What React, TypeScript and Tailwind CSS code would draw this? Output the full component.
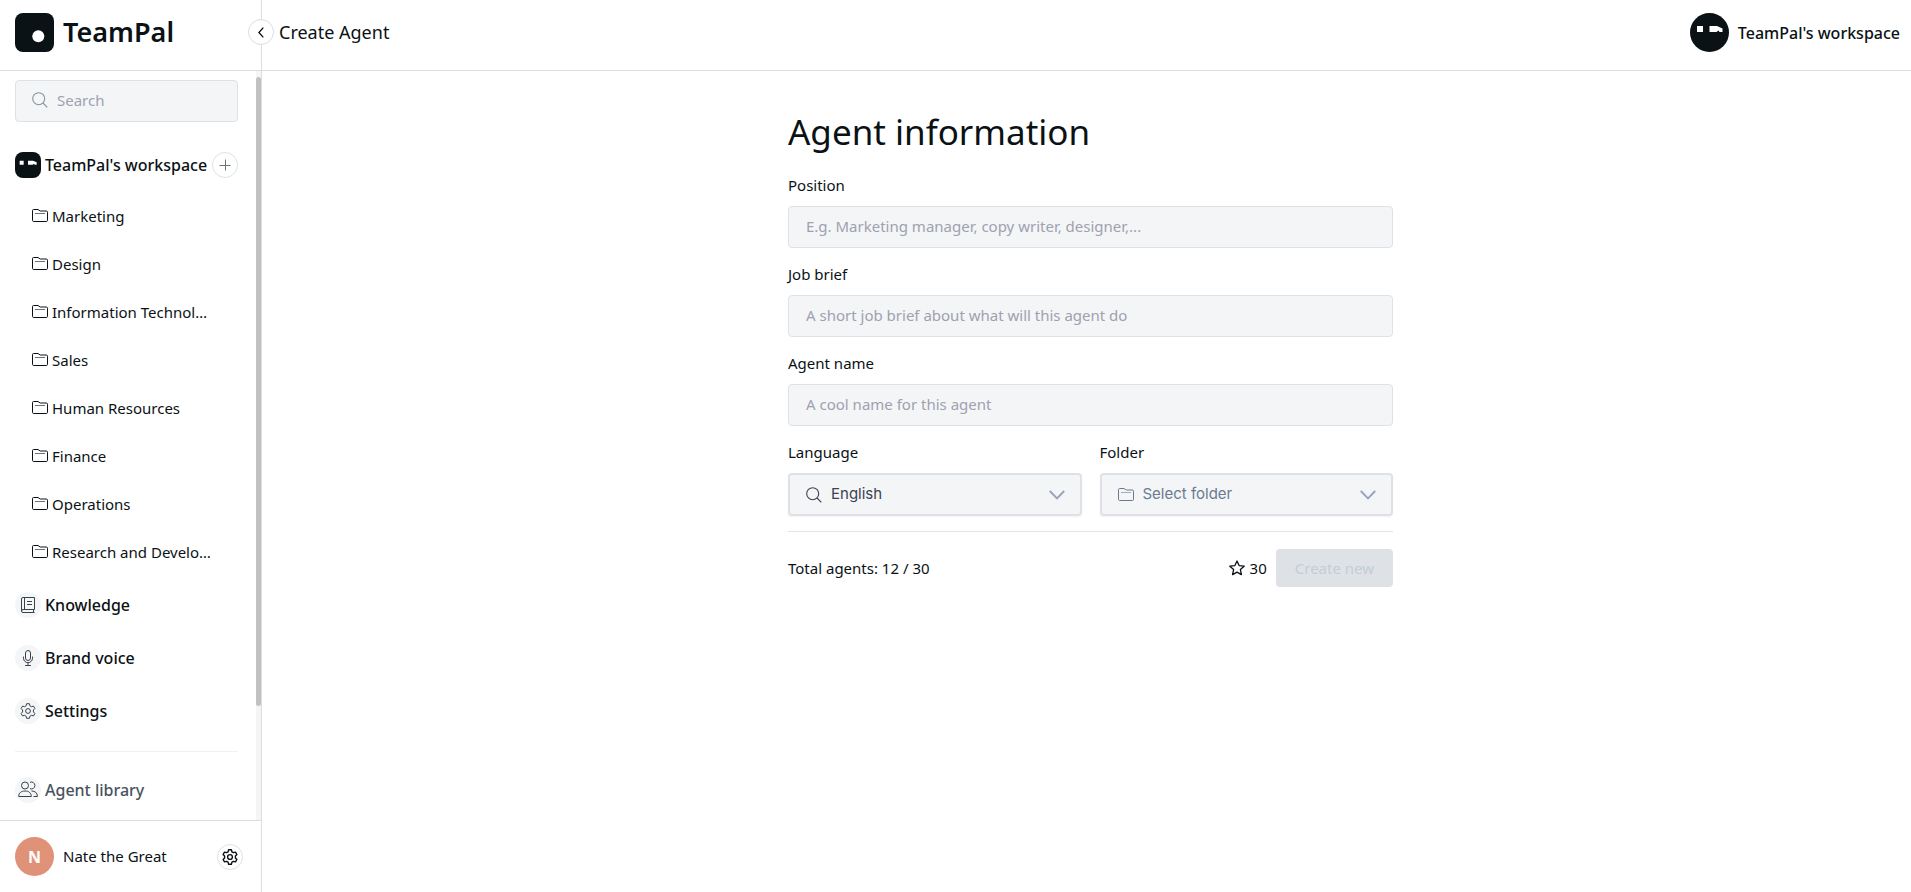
import { useState } from "react";
import type { ReactNode } from "react";
import clsx from "clsx";

interface IconProps {
  className?: string;
  strokeWidth?: number;
}

interface NavItem {
  label: string;
  icon: ReactNode;
}

const folders = [
  "Marketing",
  "Design",
  "Information Technology",
  "Sales",
  "Human Resources",
  "Finance",
  "Operations",
  "Research and Development",
];

const navItems: NavItem[] = [
  { label: "Knowledge", icon: <BookIcon className="size-4" /> },
  { label: "Brand voice", icon: <MicIcon className="size-4" /> },
  { label: "Settings", icon: <GearIcon className="size-4" /> },
];

const fields = [
  { id: "position", label: "Position", placeholder: "E.g. Marketing manager, copy writer, designer,..." },
  { id: "brief", label: "Job brief", placeholder: "A short job brief about what will this agent do" },
  { id: "name", label: "Agent name", placeholder: "A cool name for this agent" },
];

export default function App() {
  return (
    <div className="flex h-screen bg-white font-['Noto_Sans',sans-serif] text-[15px] text-[#0b1215]">
      <Sidebar />
      <div className="flex min-w-0 flex-1 flex-col">
        <Header />
        <main className="flex-1 overflow-hidden pr-4 pl-6">
          <AgentForm />
        </main>
      </div>
    </div>
  );
}

function Sidebar() {
  return (
    <aside className="flex w-[262px] shrink-0 flex-col border-r border-[#dddde3]">
      {/* Logo */}
      <div className="flex h-[71px] shrink-0 items-start gap-[9px] border-b border-[#dddde3] px-[15px] pt-[13px]">
        <svg viewBox="0 0 39 39" className="size-[39px]">
          <rect width="39" height="39" rx="8" fill="#0b1215" />
          <circle cx="23.3" cy="23.3" r="6" fill="#fff" />
        </svg>
        <span className="text-[27px] leading-[38px] font-semibold">TeamPal</span>
      </div>

      {/* Scroll area */}
      <div className="flex min-h-0 flex-1">
        <div className="min-w-0 flex-1 overflow-hidden pt-[9px] pr-[18px] pl-[15px]">
          <label className="flex h-[42px] items-center gap-[9px] rounded border border-[#dee1e6] bg-[#f4f5f7] px-4 pb-[2px]">
            <SearchIcon className="size-4 shrink-0 text-[#86949e]" />
            <input
              type="text"
              aria-label="Search"
              placeholder="Search"
              className="w-full min-w-0 bg-transparent outline-none placeholder:text-[#9ea1b0]"
            />
          </label>

          <div className="mt-[30px] flex items-center">
            <WorkspaceLogo className="size-[26px] shrink-0 rounded-lg" />
            <span className="ml-1 flex-1 text-base font-medium whitespace-nowrap">TeamPal's workspace</span>
            <button
              type="button"
              aria-label="Add folder"
              className="flex size-[26px] shrink-0 items-center justify-center rounded-full border border-[#dee1e6] text-[#6b7479]"
            >
              <svg viewBox="0 0 12 12" className="size-3" stroke="currentColor" strokeWidth="1">
                <path d="M6.5 .5v11M.5 6.5h11" />
              </svg>
            </button>
          </div>

          <ul className="mt-[14px] pr-6 pl-[17px]">
            {folders.map((folder) => (
              <li key={folder} className="flex h-12 items-center">
                <a href="#" className="flex min-w-0 items-center gap-1">
                  <FolderIcon className="size-4 shrink-0" />
                  <span className="truncate">{folder}</span>
                </a>
              </li>
            ))}
          </ul>

          <ul className="mt-[2px]">
            {navItems.map((item) => (
              <li key={item.label} className="flex h-[53px] items-center">
                <NavLink item={item} />
              </li>
            ))}
          </ul>

          <div className="mt-[14px] border-t border-[#f1f1f3] pt-[25px]">
            <NavLink item={{ label: "Agent library", icon: <UsersIcon className="size-5" /> }} muted />
          </div>
        </div>
        <div className="w-[5px] bg-[#f5f5f5] pt-[6px]">
          <div className="h-11/13 rounded-full bg-[#c1c1c1]" />
        </div>
      </div>

      {/* Account */}
      <div className="flex h-[72px] shrink-0 items-center border-t border-[#dddde3] pr-[18px] pl-[15px]">
        <span className="flex size-[39px] items-center justify-center rounded-full bg-[#df9278] text-base font-bold text-white">
          N
        </span>
        <span className="ml-[9px] flex-1">Nate the Great</span>
        <button
          type="button"
          aria-label="Account settings"
          className="flex size-[26px] items-center justify-center rounded-full border border-[#dee1e6]"
        >
          <GearIcon className="size-4" strokeWidth={1.4} />
        </button>
      </div>
    </aside>
  );
}

function NavLink({ item, muted = false }: { item: NavItem; muted?: boolean }) {
  return (
    <a href="#" className={clsx("flex items-center gap-1 text-base font-medium", muted && "text-[#49535e]")}>
      <span className="flex size-[26px] items-center justify-center rounded-full bg-[#f4f5f7] text-[#39424a]">
        {item.icon}
      </span>
      {item.label}
    </a>
  );
}

function Header() {
  return (
    <header className="flex h-[71px] shrink-0 items-start justify-between border-b border-[#dddde3] pt-[13px] pr-[11px]">
      <div className="flex h-[38px] items-center">
        <button
          type="button"
          aria-label="Collapse sidebar"
          className="-ml-[14px] flex size-[26px] items-center justify-center rounded-full border border-[#dddde3] bg-white"
        >
          <svg viewBox="0 0 6 11" className="h-[11px] w-[6px]" fill="none" stroke="currentColor" strokeWidth="1.3">
            <path d="M5.3 .6.9 5.5l4.4 4.9" />
          </svg>
        </button>
        <h1 className="ml-[5px] text-lg">Create Agent</h1>
      </div>
      <div className="flex items-center gap-[9px]">
        <WorkspaceLogo className="size-[39px] rounded-full" />
        <span className="text-base font-medium">TeamPal's workspace</span>
      </div>
    </header>
  );
}

function AgentForm() {
  const [values, setValues] = useState<Record<string, string>>({});

  return (
    <form className="mx-auto mt-[37px] w-full max-w-[605px]" onSubmit={(e) => e.preventDefault()}>
      <h2 className="text-[35px] leading-[48px]">Agent information</h2>
      <div className="mt-[17px] flex flex-col gap-[14px]">
        {fields.map((field) => (
          <div key={field.id}>
            <label htmlFor={field.id} className="block leading-6">
              {field.label}
            </label>
            <input
              id={field.id}
              type="text"
              placeholder={field.placeholder}
              value={values[field.id] ?? ""}
              onChange={(e) => setValues({ ...values, [field.id]: e.target.value })}
              className="mt-[9px] block h-[42px] w-full rounded border border-[#dee1e6] bg-[#f4f5f7] px-[17px] pb-[2px] outline-none placeholder:text-[#9ea1b0]"
            />
          </div>
        ))}
        <div className="grid grid-cols-2 gap-[18px]">
          <SelectField
            id="language"
            label="Language"
            icon={<SearchIcon className="size-4" />}
            options={["English"]}
            className="text-[#3b4351]"
          />
          <SelectField
            id="folder"
            label="Folder"
            icon={<FolderIcon className="size-4" />}
            options={["Select folder", ...folders]}
            className="text-[#6b7a90]"
          />
        </div>
      </div>

      <div className="mt-[15px] flex items-center border-t border-[#e2e4e8] pt-[17px]">
        <p className="flex-1">Total agents: 12 / 30</p>
        <StarIcon className="size-4" />
        <span className="ml-[5px]">30</span>
        <button type="submit" disabled className="ml-[9px] h-[38px] rounded bg-[#dee2e7] px-[19px] text-[#c3cdd6]">
          Create new
        </button>
      </div>
    </form>
  );
}

interface SelectFieldProps {
  id: string;
  label: string;
  icon: ReactNode;
  options: string[];
  className?: string;
}

function SelectField({ id, label, icon, options, className }: SelectFieldProps) {
  return (
    <div>
      <label htmlFor={id} className="block leading-6">
        {label}
      </label>
      <div
        className={clsx(
          "mt-[9px] grid h-[43px] items-center rounded border-2 border-[#dee1e6] bg-[#f4f5f7] shadow-xs",
          className
        )}
      >
        <select
          id={id}
          className="col-start-1 row-start-1 h-full w-full appearance-none bg-transparent px-[41px] font-[Inter,sans-serif] outline-none"
        >
          {options.map((option) => (
            <option key={option}>{option}</option>
          ))}
        </select>
        <span className="pointer-events-none col-start-1 row-start-1 ml-4 justify-self-start">{icon}</span>
        <svg
          viewBox="0 0 16 10"
          className="pointer-events-none col-start-1 row-start-1 mr-[15px] h-[10px] w-4 justify-self-end text-[#94a3b8]"
          fill="none"
          stroke="currentColor"
          strokeWidth="1.8"
        >
          <path d="M.8 1 8 8.4 15.2 1" />
        </svg>
      </div>
    </div>
  );
}

/* Icons */

function WorkspaceLogo({ className }: IconProps) {
  return (
    <svg viewBox="0 0 39 39" className={className}>
      <rect width="39" height="39" fill="#0b1215" />
      <path d="M7 13h6v6H7zM19.5 13h7.5l5.5 2.500v3.500h-3l-1-1.500-2 1.500h-7z" fill="#fff" />
    </svg>
  );
}

function SearchIcon({ className }: IconProps) {
  return (
    <svg viewBox="0 0 16 16" className={className} fill="none" stroke="currentColor" strokeWidth="1.1">
      <circle cx="6.7" cy="6.7" r="6" />
      <path d="m11 11 4.3 4.3" />
    </svg>
  );
}

function FolderIcon({ className }: IconProps) {
  return (
    <svg viewBox="0 0 16 16" className={className} fill="none" stroke="currentColor" strokeWidth="1" strokeLinejoin="round">
      <path d="M.5 2.700a1.200 1.200 0 0 1 1.200-1.200h4.300l2.200 1.500h6.100a1.200 1.200 0 0 1 1.200 1.200v8.100a1.200 1.200 0 0 1-1.200 1.200H1.700a1.200 1.200 0 0 1-1.200-1.200z" />
      <path d="M3 5.500h10" opacity=".6" />
    </svg>
  );
}

function BookIcon({ className }: IconProps) {
  return (
    <svg viewBox="0 0 16 16" className={className} fill="none" stroke="currentColor" strokeWidth="1" strokeLinejoin="round">
      <path d="M14.500 12.500V.5H3A1.500 1.500 0 0 0 1.500 2v12A1.500 1.500 0 0 0 3 15.500h11.500M1.500 14A1.500 1.500 0 0 1 3 12.500h11.500M13.500 12.500v3M4.500.5v12M7 4.500h5M7 7.500h5" />
    </svg>
  );
}

function MicIcon({ className }: IconProps) {
  return (
    <svg viewBox="0 0 16 16" className={className} fill="none" stroke="currentColor" strokeWidth="1" strokeLinecap="round">
      <rect x="5.500" y=".5" width="5" height="10" rx="2.500" />
      <path d="M3.500 7v1.200a4.500 4.500 0 0 0 9 0V7M8 12.700v2.800M5.500 15.500h5" />
    </svg>
  );
}

function GearIcon({ className, strokeWidth = 1 }: IconProps) {
  return (
    <svg
      viewBox="0 0 16 16"
      className={className}
      fill="none"
      stroke="currentColor"
      strokeWidth={strokeWidth}
      strokeLinejoin="round"
    >
      <path d="M6.600.7h2.800l.5 2.100 1.500.9 2.100-.6 1.400 2.400-1.500 1.500v2l1.500 1.500-1.400 2.400-2.100-.6-1.500.9-.5 2.100H6.600l-.5-2.100-1.500-.9-2.100.6-1.400-2.400 1.500-1.500V7L1.100 5.500l1.400-2.400 2.100.6 1.500-.9z" />
      <circle cx="8" cy="8" r="2.400" />
    </svg>
  );
}

function UsersIcon({ className }: IconProps) {
  return (
    <svg viewBox="0 0 20 20" className={className} fill="none" stroke="currentColor" strokeWidth="1" strokeLinejoin="round">
      <circle cx="7" cy="5.500" r="3.500" />
      <path d="M.7 16.500c0-3.600 2.500-5.500 6.300-5.500s6.300 1.900 6.300 5.500zM12 2.300a3.500 3.500 0 1 1 0 6.400M13.500 11c3.600 0 5.900 1.900 5.900 5.500H15.500" />
    </svg>
  );
}

function StarIcon({ className }: IconProps) {
  return (
    <svg viewBox="0 0 16 16" className={className} fill="none" stroke="currentColor" strokeWidth="1.300" strokeLinejoin="round">
      <path d="m8 1 2.100 4.600 5.100.6-3.800 3.400 1 5L8 12.100l-4.400 2.500 1-5L.8 6.200l5.100-.6z" />
    </svg>
  );
}
